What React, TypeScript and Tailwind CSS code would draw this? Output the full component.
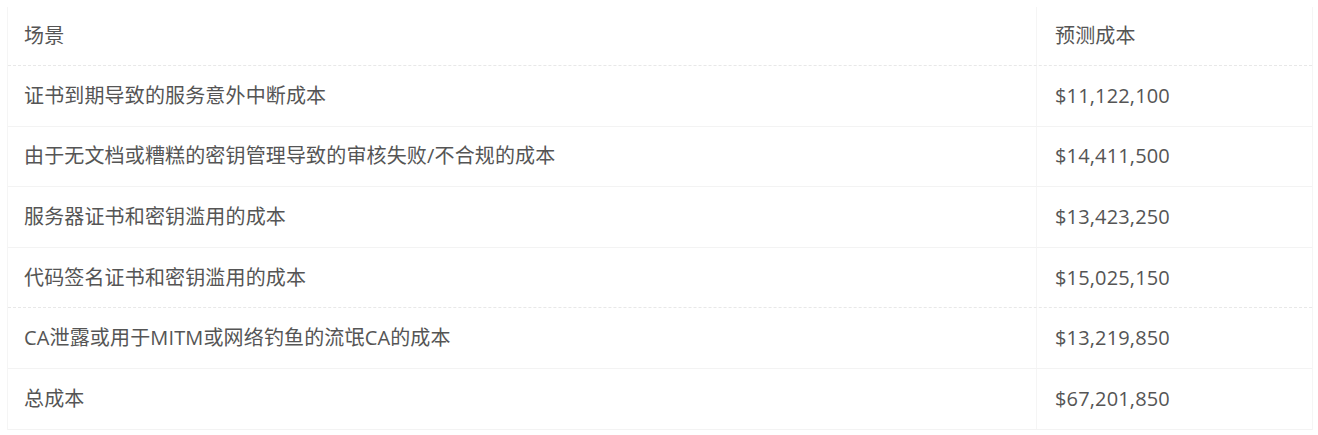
import React from "react";

const rows: [string, string][] = [
  ["证书到期导致的服务意外中断成本", "$11,122,100"],
  ["由于无文档或糟糕的密钥管理导致的审核失败/不合规的成本", "$14,411,500"],
  ["服务器证书和密钥滥用的成本", "$13,423,250"],
  ["代码签名证书和密钥滥用的成本", "$15,025,150"],
  ["CA泄露或用于MITM或网络钓鱼的流氓CA的成本", "$13,219,850"],
  ["总成本", "$67,201,850"],
];

export default function App() {
  return (
    <div
      className="w-[1318px] h-[435px] bg-white pt-[7px] pl-[7px] overflow-hidden text-[#555555] text-[20px] tracking-[0.15px]"
      style={{ fontFamily: '"Open Sans", "Noto Sans CJK SC", sans-serif' }}
    >
      <div className="w-[1306px] border-l border-r border-[#f5f5f5]">
        <div className="grid grid-cols-[1029px_277px] h-[59px] border-b border-dashed border-[#e8e8e8]">
          <div className="flex items-center pl-[16px] border-r border-[#f5f5f5]">场景</div>
          <div className="flex items-center pl-[18px]">预测成本</div>
        </div>
        {rows.map(([a, b], i) => (
          <div
            key={i}
            className={
              "grid grid-cols-[1029px_277px] h-[60.6px] border-b " +
              (i === 3 ? "border-dashed border-[#e8e8e8]" : "border-[#f3f3f3]")
            }
          >
            <div className="flex items-center pl-[16px] border-r border-[#f5f5f5]">{a}</div>
            <div className="flex items-center pl-[18px]">{b}</div>
          </div>
        ))}
      </div>
    </div>
  );
}
